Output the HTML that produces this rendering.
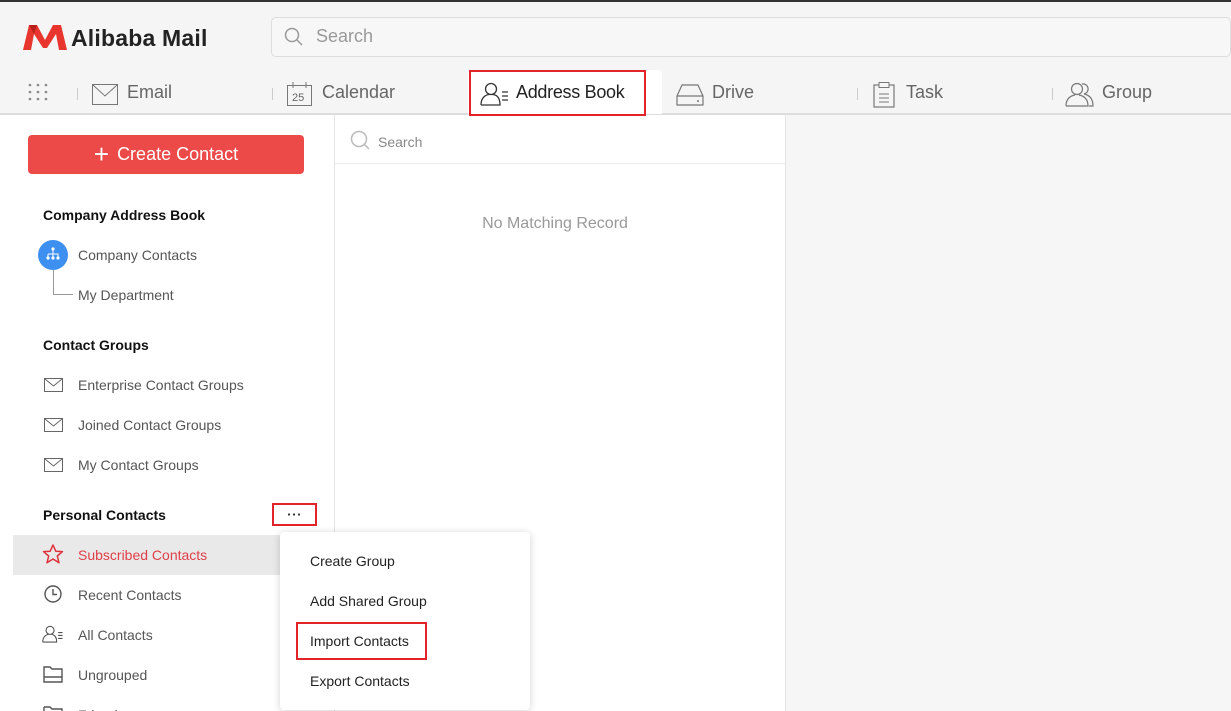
<!DOCTYPE html>
<html style="width:1231px;height:711px;overflow:hidden"><head><meta charset="utf-8"><style>
*{box-sizing:border-box;margin:0;padding:0}
body{width:1231px;height:711px;overflow:hidden;background:#f5f5f5;font-family:"Liberation Sans",Arial,sans-serif;position:relative}
.a{position:absolute}
.t{font-size:14px;color:#555}
.h{font-size:14px;font-weight:bold;color:#111}
.tab{font-size:18px;color:#666;position:absolute;top:82px}
.sep{position:absolute;top:88px;width:1px;height:12px;background:#ccc}
svg{position:absolute}
</style></head><body>
<div class="a" style="left:0;top:0;width:1231px;height:2px;background:#333"></div>
<svg style="left:23px;top:24px" width="44" height="27" viewBox="0 0 44 27"><path d="M0 26 L6 1 L14 1 L22 16 L30 1 L38 1 L44 26 L36 26 L33 10 L24 24 L20 24 L11 10 L8 26Z" fill="#e8362f"/><path d="M6 1 L14 1 L11 10 Z" fill="#b71f1a"/></svg>
<div class="a" style="left:71px;top:25px;font-size:23px;font-weight:bold;color:#222;letter-spacing:0.2px">Alibaba Mail</div>
<div class="a" style="left:271px;top:17px;width:960px;height:40px;border:1px solid #ddd;border-radius:5px;background:#f7f7f7"></div>
<svg style="left:284px;top:27px" width="20" height="20" viewBox="0 0 20 20"><circle cx="8" cy="8" r="6.5" fill="none" stroke="#999" stroke-width="1.5"/><path d="M13 13 L18 18" stroke="#999" stroke-width="1.5"/></svg>
<div class="a" style="left:316px;top:26px;font-size:18px;color:#999">Search</div>
<svg style="left:28px;top:83px" width="20" height="18"><g fill="#888"><circle cx="2" cy="2" r="1.3"/><circle cx="10" cy="2" r="1.3"/><circle cx="18" cy="2" r="1.3"/><circle cx="2" cy="9" r="1.3"/><circle cx="10" cy="9" r="1.3"/><circle cx="18" cy="9" r="1.3"/><circle cx="2" cy="16" r="1.3"/><circle cx="10" cy="16" r="1.3"/><circle cx="18" cy="16" r="1.3"/></g></svg>
<div class="sep" style="left:77px"></div>
<svg style="left:92px;top:84px" width="26" height="21"><rect x="0.5" y="0.5" width="25" height="20" fill="none" stroke="#777"/><path d="M1 1 L13 12 L25 1" fill="none" stroke="#777"/></svg>
<div class="tab" style="left:127px">Email</div>
<div class="sep" style="left:272px"></div>
<svg style="left:287px;top:82px" width="25" height="24"><rect x="0.5" y="3.5" width="24" height="20" fill="none" stroke="#777"/><path d="M6 0V6M19 0V6" stroke="#777"/><text x="5" y="19" font-size="11" fill="#666" font-family="Liberation Sans">25</text></svg>
<div class="tab" style="left:322px">Calendar</div>
<div class="a" style="left:0;top:113px;width:1231px;height:2px;background:#ddd"></div>
<div class="a" style="left:468px;top:70px;width:194px;height:44px;background:#fff;border-radius:4px 4px 0 0"></div>
<div class="a" style="left:469px;top:70px;width:177px;height:46px;border:2px solid #e0242a;z-index:5"></div>
<svg style="left:480px;top:82px" width="30" height="24" viewBox="0 0 30 24"><circle cx="11" cy="7" r="5.5" fill="none" stroke="#333" stroke-width="1.3"/><path d="M1 23 C1 16 5 13 9 12.5 M13 12.5 C17 13 20 16 20 23 H1" fill="none" stroke="#333" stroke-width="1.3"/><path d="M22 10H28M22 14H28M22 18H28" stroke="#333" stroke-width="1.3"/></svg>
<div class="tab" style="left:516px;color:#222;letter-spacing:-0.3px">Address Book</div>
<svg style="left:676px;top:84px" width="28" height="22"><path d="M1 21V12L6 1H22L27 12V21Z M1 12H27" fill="none" stroke="#777" stroke-width="1.2"/><circle cx="22" cy="17" r="1" fill="#777"/></svg>
<div class="tab" style="left:712px">Drive</div>
<div class="sep" style="left:857px"></div>
<svg style="left:873px;top:82px" width="22" height="26"><rect x="1" y="3" width="20" height="22" fill="none" stroke="#777" stroke-width="1.2"/><rect x="6" y="0.5" width="10" height="5" fill="#f5f5f5" stroke="#777"/><path d="M6 12H16M6 16H16M6 20H16" stroke="#777"/></svg>
<div class="tab" style="left:906px">Task</div>
<div class="sep" style="left:1052px"></div>
<svg style="left:1065px;top:82px" width="30" height="25"><circle cx="12" cy="7" r="5.5" fill="none" stroke="#777" stroke-width="1.2"/><path d="M1 24C1 17 5 14 10 13M14 13C19 14 23 17 23 24H1" fill="none" stroke="#777" stroke-width="1.2"/><path d="M17 2A5 5 0 1 1 19 12C24 13 28 16 28 24H24" fill="none" stroke="#777" stroke-width="1.2"/></svg>
<div class="tab" style="left:1102px">Group</div>
<div class="a" style="left:0;top:115px;width:334px;height:596px;background:#fff"></div>
<div class="a" style="left:334px;top:115px;width:1px;height:596px;background:#e4e4e4"></div>
<div class="a" style="left:335px;top:115px;width:450px;height:596px;background:#fff"></div>
<div class="a" style="left:785px;top:115px;width:1px;height:596px;background:#e4e4e4"></div>
<div class="a" style="left:786px;top:115px;width:445px;height:596px;background:#f6f6f6"></div>
<div class="a" style="left:28px;top:135px;width:276px;height:39px;background:#ec4a48;border-radius:4px;color:#fff;font-size:18px;text-align:center;line-height:39px">
<span style="font-size:26px;font-weight:300;vertical-align:-3px;margin-right:8px">+</span>Create Contact</div>
<div class="h a" style="left:43px;top:207px">Company Address Book</div>
<div class="a" style="left:38px;top:240px;width:30px;height:30px;border-radius:50%;background:#3d8ff0"></div>
<svg style="left:45px;top:246px" width="16" height="16"><g fill="#fff"><circle cx="8" cy="3" r="1.6"/><circle cx="3" cy="12" r="1.6"/><circle cx="8" cy="12" r="1.6"/><circle cx="13" cy="12" r="1.6"/></g><path d="M8 4V12M3 8H13V12M3 8V12" stroke="#fff" fill="none"/></svg>
<div class="a" style="left:53px;top:270px;width:1px;height:24px;background:#999"></div>
<div class="a" style="left:53px;top:294px;width:20px;height:1px;background:#999"></div>
<div class="t a" style="left:78px;top:247px">Company Contacts</div>
<div class="t a" style="left:78px;top:287px">My Department</div>
<div class="h a" style="left:43px;top:337px">Contact Groups</div>
<svg style="left:44px;top:377px" width="20" height="16"><rect x="0.5" y="1.5" width="18" height="13" fill="none" stroke="#666"/><path d="M1 2L9.5 9L18 2" fill="none" stroke="#666"/></svg>
<div class="t a" style="left:78px;top:377px">Enterprise Contact Groups</div>
<svg style="left:44px;top:417px" width="20" height="16"><rect x="0.5" y="1.5" width="18" height="13" fill="none" stroke="#666"/><path d="M1 2L9.5 9L18 2" fill="none" stroke="#666"/></svg>
<div class="t a" style="left:78px;top:417px">Joined Contact Groups</div>
<svg style="left:44px;top:457px" width="20" height="16"><rect x="0.5" y="1.5" width="18" height="13" fill="none" stroke="#666"/><path d="M1 2L9.5 9L18 2" fill="none" stroke="#666"/></svg>
<div class="t a" style="left:78px;top:457px">My Contact Groups</div>
<div class="h a" style="left:43px;top:507px">Personal Contacts</div>
<div class="a" style="left:272px;top:503px;width:45px;height:23px;border:2px solid #e0242a"></div>
<svg style="left:287px;top:513px" width="14" height="3"><g fill="#333"><circle cx="2" cy="1.5" r="1.1"/><circle cx="7" cy="1.5" r="1.1"/><circle cx="12" cy="1.5" r="1.1"/></g></svg>
<div class="a" style="left:13px;top:535px;width:321px;height:40px;background:#e9e9e9"></div>
<svg style="left:42px;top:544px" width="22" height="20" viewBox="0 0 22 20"><path d="M11 1L13.8 7.2L20.5 7.6L15.3 12L17 18.8L11 15L5 18.8L6.7 12L1.5 7.6L8.2 7.2Z" fill="none" stroke="#e0303a" stroke-width="1.5" stroke-linejoin="round"/></svg>
<div class="a" style="left:78px;top:547px;font-size:14px;color:#e0404a">Subscribed Contacts</div>
<svg style="left:43px;top:584px" width="20" height="20"><circle cx="10" cy="10" r="8" fill="none" stroke="#555" stroke-width="1.4"/><path d="M10 5V10.5H14" fill="none" stroke="#555" stroke-width="1.4"/></svg>
<div class="t a" style="left:78px;top:587px">Recent Contacts</div>
<svg style="left:42px;top:624px" width="22" height="20" viewBox="0 0 30 24"><circle cx="11" cy="7" r="5.5" fill="none" stroke="#555" stroke-width="1.5"/><path d="M1 23C1 16 5 13 9 12.5M13 12.5C17 13 20 16 20 23H1" fill="none" stroke="#555" stroke-width="1.5"/><path d="M22 10H28M22 14H28M22 18H28" stroke="#555" stroke-width="1.5"/></svg>
<div class="t a" style="left:78px;top:627px">All Contacts</div>
<svg style="left:43px;top:665px" width="20" height="18"><path d="M1 2H7L9 4H19V17H1Z M1 12H19" fill="none" stroke="#555" stroke-width="1.4"/></svg>
<div class="t a" style="left:78px;top:667px">Ungrouped</div>
<svg style="left:43px;top:705px" width="20" height="6"><path d="M1 2H7L9 4H19V6M1 2V6" fill="none" stroke="#555" stroke-width="1.4"/></svg>
<div class="a" style="left:0;top:704px;width:334px;height:7px;overflow:hidden"><div class="t a" style="left:78px;top:3px">Friends</div></div>
<svg style="left:350px;top:130px" width="22" height="22"><circle cx="9" cy="9" r="7.5" fill="none" stroke="#bbb" stroke-width="1.5"/><path d="M14.5 14.5L19 19" stroke="#bbb" stroke-width="1.5"/></svg>
<div class="a" style="left:378px;top:134px;font-size:14px;color:#888">Search</div>
<div class="a" style="left:335px;top:163px;width:450px;height:1px;background:#ececec"></div>
<div class="a" style="left:335px;top:215px;width:440px;text-align:center;font-size:16px;color:#999">No Matching Record</div>
<div class="a" style="left:280px;top:532px;width:250px;height:178px;background:#fff;border-radius:4px;box-shadow:0 1px 8px rgba(0,0,0,.18)"></div>
<div class="a" style="left:310px;top:553px;font-size:14px;color:#222">Create Group</div>
<div class="a" style="left:310px;top:593px;font-size:14px;color:#222">Add Shared Group</div>
<div class="a" style="left:296px;top:622px;width:131px;height:38px;border:2px solid #e0242a"></div>
<div class="a" style="left:310px;top:633px;font-size:14px;color:#222">Import Contacts</div>
<div class="a" style="left:310px;top:673px;font-size:14px;color:#222">Export Contacts</div>
</body></html>
